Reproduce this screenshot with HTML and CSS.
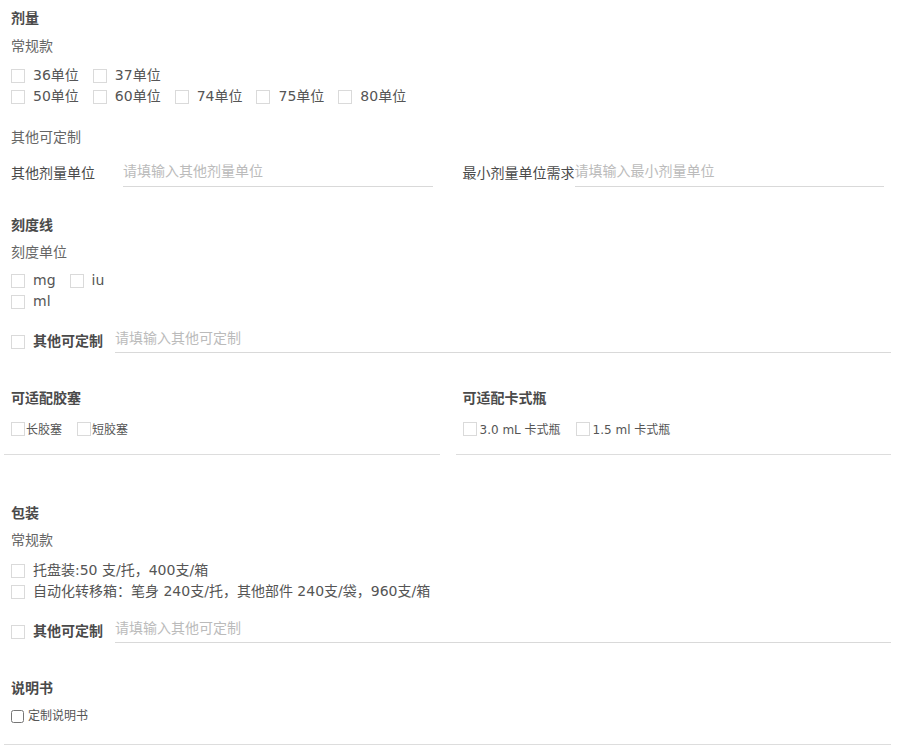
FILE: index.html
```html
<!DOCTYPE html>
<html lang="zh-CN">
<head>
  <meta charset="UTF-8">
  <meta name="viewport" content="width=device-width, initial-scale=1">
  <title>定制需求</title>
  <link rel="stylesheet" href="styles.css">
</head>
<body>
<form class="form">

  <!-- 剂量 -->
  <section class="block">
    <h3 class="title">剂量</h3>
    <p class="sub">常规款</p>
    <div class="checks">
      <div class="check-row">
        <label class="check"><span class="box"></span>36单位</label>
        <label class="check"><span class="box"></span>37单位</label>
      </div>
      <div class="check-row">
        <label class="check"><span class="box"></span>50单位</label>
        <label class="check"><span class="box"></span>60单位</label>
        <label class="check"><span class="box"></span>74单位</label>
        <label class="check"><span class="box"></span>75单位</label>
        <label class="check"><span class="box"></span>80单位</label>
      </div>
    </div>
    <p class="sub other">其他可定制</p>
    <div class="field-cols">
      <div class="field">
        <span class="field-label">其他剂量单位</span>
        <input type="text" placeholder="请填输入其他剂量单位">
      </div>
      <div class="field">
        <span class="field-label">最小剂量单位需求</span>
        <input type="text" placeholder="请填输入最小剂量单位">
      </div>
    </div>
  </section>

  <!-- 刻度线 -->
  <section class="block scale">
    <h3 class="title">刻度线</h3>
    <p class="sub tight">刻度单位</p>
    <div class="checks">
      <div class="check-row">
        <label class="check"><span class="box"></span>mg</label>
        <label class="check"><span class="box"></span>iu</label>
      </div>
      <div class="check-row">
        <label class="check"><span class="box"></span>ml</label>
      </div>
    </div>
    <div class="custom">
      <label class="check strong"><span class="box"></span>其他可定制</label>
      <input type="text" placeholder="请填输入其他可定制">
    </div>
  </section>

  <!-- 胶塞 / 卡式瓶 -->
  <div class="pair">
    <section class="pair-col">
      <h3 class="title">可适配胶塞</h3>
      <div class="mini-row">
        <label class="mini"><span class="box"></span>长胶塞</label>
        <label class="mini"><span class="box"></span>短胶塞</label>
      </div>
    </section>
    <section class="pair-col">
      <h3 class="title">可适配卡式瓶</h3>
      <div class="mini-row">
        <label class="mini spaced"><span class="box"></span>3.0 mL 卡式瓶</label>
        <label class="mini spaced"><span class="box"></span>1.5 ml 卡式瓶</label>
      </div>
    </section>
  </div>

  <!-- 包装 -->
  <section class="block pack">
    <h3 class="title">包装</h3>
    <p class="sub tight">常规款</p>
    <div class="checks">
      <div class="check-row">
        <label class="check"><span class="box"></span>托盘装:50 支/托，400支/箱</label>
      </div>
      <div class="check-row">
        <label class="check"><span class="box"></span>自动化转移箱：笔身 240支/托，其他部件 240支/袋，960支/箱</label>
      </div>
    </div>
    <div class="custom">
      <label class="check strong"><span class="box"></span>其他可定制</label>
      <input type="text" placeholder="请填输入其他可定制">
    </div>
  </section>

  <!-- 说明书 -->
  <section class="block manual">
    <h3 class="title">说明书</h3>
    <label class="native"><input type="checkbox">定制说明书</label>
  </section>

</form>
</body>
</html>
```

FILE: styles.css
```css
body {
  margin: 0;
  background: #fff;
  color: #555;
  font-family: "DejaVu Sans", "Noto Sans CJK SC", sans-serif;
  font-size: 14px;
}

.form {
  padding: 8px 8px 0 4px;
}

.block {
  padding: 0 7px;
}

.title {
  margin: 0;
  font-size: 14px;
  line-height: 20px;
  font-weight: bold;
  color: #4a4a4a;
}

.sub {
  margin: 8px 0 0;
  line-height: 20px;
  color: #666;
}

.sub.tight {
  margin-top: 7px;
}

.sub.other {
  margin-top: 20px;
}

/* checkbox lists */
.checks {
  margin-top: 9px;
}

.check-row {
  display: flex;
  height: 21px;
  align-items: center;
}

.check {
  display: flex;
  align-items: center;
  gap: 8px;
  margin-right: 14px;
  color: #555;
  line-height: 21px;
  white-space: nowrap;
}

.check.strong {
  font-weight: 600;
  color: #4a4a4a;
}

.box {
  display: inline-block;
  width: 12px;
  height: 12px;
  border: 1px solid #dadada;
  background: #fff;
  flex-shrink: 0;
}

/* text inputs */
input[type="text"] {
  height: 31px;
  padding: 0;
  border: none;
  border-bottom: 1px solid #d9d9d9;
  outline: none;
  font-family: inherit;
  font-size: 14px;
  color: #555;
  background: transparent;
  box-sizing: border-box;
}

input[type="text"]::placeholder {
  color: #bbb;
}

.field-cols {
  display: grid;
  grid-template-columns: 1fr 1fr;
  column-gap: 30px;
  margin-top: 9px;
}

.field {
  display: flex;
  align-items: center;
}

.field-label {
  width: 112px;
  flex-shrink: 0;
  white-space: nowrap;
  color: #4a4a4a;
}

.field input {
  flex: 1;
  min-width: 0;
}

.scale {
  margin-top: 28px;
}

.scale .checks {
  margin-top: 8px;
}

.custom {
  display: flex;
  align-items: flex-end;
  margin: 13px -7px 0 0;
}

.custom .check {
  margin-right: 12px;
  margin-bottom: 1px;
}

.custom input {
  flex: 1;
  height: 28px;
  padding-bottom: 2px;
}

/* two column blocks */
.pair {
  display: grid;
  grid-template-columns: 1fr 1fr;
  column-gap: 16px;
  margin-top: 35px;
}

.pair-col {
  padding: 0 7px 15px;
  border-bottom: 1px solid #ddd;
}

.mini-row {
  display: flex;
  align-items: center;
  height: 21px;
  margin-top: 10px;
}

.mini {
  display: flex;
  align-items: center;
  gap: 1px;
  margin-right: 15px;
  font-size: 12px;
  color: #555;
  white-space: nowrap;
}

.mini.spaced {
  gap: 3px;
}

.pack {
  margin-top: 48px;
}

.pack .checks {
  margin-top: 10px;
}

.pack .custom {
  margin-top: 13px;
}

.manual {
  margin-top: 35px;
  padding-bottom: 18px;
  border-bottom: 1px solid #ddd;
}

.native {
  display: flex;
  align-items: center;
  margin-top: 8px;
  line-height: 20px;
  font-size: 12px;
  color: #555;
}

.native input {
  width: 13px;
  height: 13px;
  margin: 0 4px 0 0;
}
```
